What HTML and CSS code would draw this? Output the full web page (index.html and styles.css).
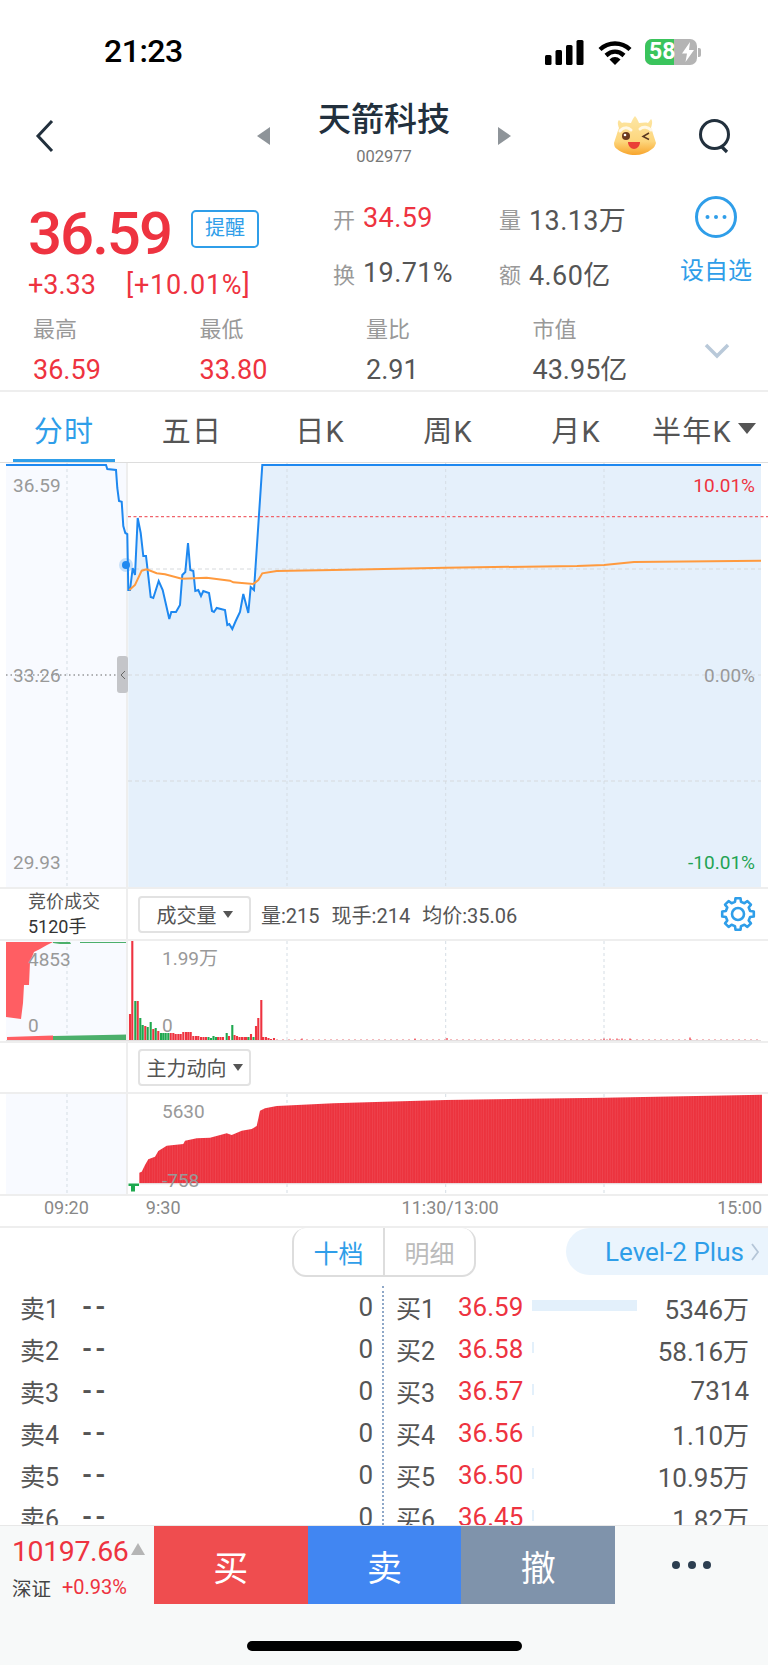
FILE: index.html
```html
<html>
    <head>
        <title>天箭科技</title>
        <meta charset="utf-8">
        <link rel="stylesheet" href="styles.css">
    </head>
    <body>
        <div class="statusbar">
            <span class="clock">21:23</span>
            <svg class="signal" width="40" height="26" viewBox="0 0 40 26">
                <rect x="0" y="15" width="6.5" height="10" rx="1.5"/>
                <rect x="10.5" y="10" width="6.5" height="15" rx="1.5"/>
                <rect x="21" y="5" width="6.5" height="20" rx="1.5"/>
                <rect x="31.5" y="0" width="7" height="25" rx="1.5"/>
            </svg>
            <svg class="wifi" width="34" height="25" viewBox="0 0 34 25">
                <path d="M2 9.5C10.5 1.5 23.5 1.5 32 9.5" fill="none" stroke="#000" stroke-width="4.4"/>
                <path d="M8 15.5C13.5 10.5 20.5 10.5 26 15.5" fill="none" stroke="#000" stroke-width="4.4"/>
                <path d="M11.5 19.5C14.8 16.2 19.2 16.2 22.5 19.5L17 25z"/>
            </svg>
            <div class="battery">
                <div class="battery-level"><span class="battery-num">58</span></div>
                <svg class="bolt" width="14" height="20" viewBox="0 0 14 20"><path d="M9 0L1 11.5h5L4.5 20 13 8H8z"/></svg>
            </div>
            <i class="battery-nub"></i>
        </div>

        <div class="nav">
            <svg class="back" width="20" height="34" viewBox="0 0 20 34"><path d="M17 2L3 17l14 15" fill="none" stroke="#22303d" stroke-width="3"/></svg>
            <i class="arrow arrow-left"></i>
            <div class="title-box">
                <div class="title">天箭科技</div>
                <div class="code">002977</div>
            </div>
            <i class="arrow arrow-right"></i>
            <svg class="mascot" width="44" height="40" viewBox="0 0 44 40">
                <defs>
                    <linearGradient id="mascotFill" x1="0" y1="0" x2="0" y2="1">
                        <stop offset="0" stop-color="#fde7a6"/>
                        <stop offset="0.65" stop-color="#fdd67c"/>
                        <stop offset="1" stop-color="#f8a52c"/>
                    </linearGradient>
                </defs>
                <path d="M22 0C24 2 25 5 26 7 29 7 32 6 35 7L38 3C40 5 39 9 38 12 40 17 41 21 43 27 42 30 41 32 39 33 34 37 28 39 22 39S9 37 4 33C2 32 1 30 1 27 3 21 4 17 6 12 5 9 4 6 6 4L9 7C12 6 15 7 18 7 19 5 20 2 22 0z" fill="url(#mascotFill)"/>
                <path d="M7 15C10 11 15 11 18 14M27 13C30 10 35 11 38 14" fill="none" stroke="#fff8e6" stroke-width="3" stroke-linecap="round"/>
                <circle cx="13" cy="20" r="4" fill="#6b3a1c"/>
                <circle cx="12" cy="19" r="1.3" fill="#fff"/>
                <path d="M36 17l-6 3.500 6 3" fill="none" stroke="#5b3a22" stroke-width="1.5"/>
                <path d="M15 26h12c0 4-3 7-6 7s-6-3-6-7z" fill="#ea3f36"/>
            </svg>
            <svg class="search" width="34" height="36" viewBox="0 0 34 36">
                <circle cx="16.500" cy="16.500" r="14" fill="none" stroke="#22303d" stroke-width="3"/>
                <path d="M23 28l6 6" stroke="#22303d" stroke-width="3.200"/>
            </svg>
        </div>

        <div class="quote">
            <div class="price-col">
                <div class="price-row">
                    <span class="price">36.59</span>
                    <span class="remind">提醒</span>
                </div>
                <div class="delta"><span class="delta-abs">+3.33</span><span class="delta-pct">[+10.01%]</span></div>
            </div>
            <div class="mid-col">
                <div class="kv"><label>开</label><b class="red">34.59</b></div>
                <div class="kv"><label>换</label><b>19.71%</b></div>
            </div>
            <div class="vol-col">
                <div class="kv"><label>量</label><b>13.13万</b></div>
                <div class="kv"><label>额</label><b>4.60亿</b></div>
            </div>
            <div class="action">
                <svg width="44" height="44" viewBox="0 0 44 44">
                    <circle cx="22" cy="22" r="19.500" fill="none" stroke="#2f9ee9" stroke-width="3"/>
                    <circle cx="13.500" cy="22" r="2" fill="#2f9ee9"/>
                    <circle cx="22" cy="22" r="2" fill="#2f9ee9"/>
                    <circle cx="30.500" cy="22" r="2" fill="#2f9ee9"/>
                </svg>
                <span>设自选</span>
            </div>
        </div>

        <div class="stats">
            <div class="stat"><label>最高</label><b class="red">36.59</b></div>
            <div class="stat"><label>最低</label><b class="red">33.80</b></div>
            <div class="stat"><label>量比</label><b>2.91</b></div>
            <div class="stat"><label>市值</label><b>43.95亿</b></div>
            <svg class="more" width="26" height="16" viewBox="0 0 26 16"><path d="M2 2l11 11L24 2" fill="none" stroke="#b9c9d9" stroke-width="3.500"/></svg>
        </div>

        <div class="tabs">
            <div class="tab active">分时</div>
            <div class="tab">五日</div>
            <div class="tab">日K</div>
            <div class="tab">周K</div>
            <div class="tab">月K</div>
            <div class="tab">半年K<i class="caret caret-big"></i></div>
        </div>

        <svg class="chart" width="768" height="424" viewBox="0 463 768 424">
            <rect class="pre-bg" x="6" y="463" width="122" height="424"/>
            <path class="area" d="M128.300 590H130L132.700 568 135 575 137.700 518 140.700 533 143.300 556H146L150.700 597 153.300 598 158.700 581 162.700 590 169.300 619 171.300 612H176L180 605 182.300 575 185.300 572 188 543 190.300 570 193.300 571 195.300 591 198.300 590 201 596 203.300 591 209 593 212 611 214 612 216.700 608 225 610 227.300 625 229.300 624 232.300 629 235.700 621 240 612 243.300 594 248.300 613 250.700 587 254 590 262.300 465H761V887H128.300z"/>
            <path class="grid-v" d="M67 463V887M287 463V887M445.700 463V887M604 463V887"/>
            <path class="grid-h" d="M128 569H761M128 675H761M128 781H761"/>
            <path class="limit" d="M128 516.700H768"/>
            <path class="split" d="M127 463V887"/>
            <path class="pre-close" d="M6 675H118"/>
            <circle class="dot-halo" cx="126" cy="565" r="7"/>
            <circle class="dot" cx="126" cy="565" r="4"/>
            <polyline class="line-price" points="6,465 106,465 107.300,469 116,470 117.300,488 119,501 121.700,501.700 123.300,526 125.300,533 127.300,534 128.300,590 130,590 132.700,568 135,575 137.700,518 140.700,533 143.300,556 146,556 150.700,597 153.300,598 158.700,581 162.700,590 169.300,619 171.300,612 176,612 180,605 182.300,575 185.300,572 188,543 190.300,570 193.300,571 195.300,591 198.300,590 201,596 203.300,591 209,593 212,611 214,612 216.700,608 225,610 227.300,625 229.300,624 232.300,629 235.700,621 240,612 243.300,594 248.300,613 250.700,587 254,590 262.300,465 761,465"/>
            <polyline class="line-avg" points="129.300,590 135,585 141.700,570.700 146.700,569.300 156.700,573.300 165,574.300 181.700,578.700 206.700,577.700 230,580.700 233.300,582.300 253.300,584 258.300,580 262.300,573.300 276.700,571 333,570 384,569 445.700,567.700 577,566 604,565 634,562 761,560.700"/>
            <rect class="handle" x="117" y="656" width="11" height="37" rx="3"/>
            <path class="handle-mark" d="M125 671l-4 4 4 4"/>
            <text class="axis" x="13" y="492">36.59</text>
            <text class="axis" x="13" y="682">33.26</text>
            <text class="axis" x="13" y="869">29.93</text>
            <text class="axis axis-up" x="755" y="492">10.01%</text>
            <text class="axis axis-right" x="755" y="682">0.00%</text>
            <text class="axis axis-down" x="755" y="869">-10.01%</text>
        </svg>

        <div class="toolbar">
            <div class="auction">
                <span class="auction-name">竞价成交</span>
                <span class="auction-val">5120手</span>
            </div>
            <div class="picker">成交量<i class="caret"></i></div>
            <div class="readout"><span>量:215</span><span>现手:214</span><span>均价:35.06</span></div>
            <svg class="gear" width="36" height="36" viewBox="-18 -18 36 36">
                <polygon points="12.13,-3.02 15.8,-2.5 15.8,2.5 12.13,3.02 10.71,6.44 12.94,9.4 9.4,12.94 6.44,10.71 3.02,12.13 2.5,15.8 -2.5,15.8 -3.02,12.13 -6.44,10.71 -9.4,12.94 -12.94,9.4 -10.71,6.44 -12.13,3.02 -15.8,2.5 -15.8,-2.5 -12.13,-3.02 -10.71,-6.44 -12.94,-9.4 -9.4,-12.94 -6.44,-10.71 -3.02,-12.13 -2.5,-15.8 2.5,-15.8 3.02,-12.13 6.44,-10.71 9.4,-12.94 12.94,-9.4 10.71,-6.44"/>
                <circle cx="0" cy="0" r="6"/>
            </svg>
        </div>

        <svg class="chart" width="768" height="100" viewBox="0 941 768 100">
            <rect class="pre-bg" x="6" y="941" width="122" height="100"/>
            <path class="grid-v" d="M67 941V1040M287 941V1040M445.700 941V1040M604 941V1040"/>
            <path class="auction-up" d="M6 942H53L47 945 40 949 34 952 30 962 29 985H24L23 1003 21 1019 6 1017zM7 1037L53 1035.500V1040H7z"/>
            <path class="auction-down" d="M53 942H70L71 944 60 944 53 943zM80 942H128V943H80zM53 1036L128 1034.500V1040H53z"/>
            <path class="split" d="M127 941V1041"/>
            <path class="base" d="M6 1040.500H761"/>
            <path class="vol-up" d="M130 1040V1014M132.300 1040V941M137.700 1040V1001M145.300 1040V1026M153.300 1040V1029M158.300 1040V1031M170.700 1040V1033M173.300 1040V1033M175.700 1040V1034M178.300 1040V1034M180.700 1040V1034M183.300 1040V1032M186 1040V1032M188.300 1040V1032M190.700 1040V1032M193.300 1040V1036M196 1040V1036M198.300 1040V1036M201 1040V1037M203.500 1040V1037M206 1040V1037M218 1040V1037M220.500 1040V1037M223 1040V1037M229 1040V1036M234.500 1040V1035M237 1040V1036M239.500 1040V1037M242 1040V1037M244.500 1040V1037M246.500 1040V1037M251 1040V1034M256 1040V1026M258.300 1040V1018M261.300 1040V1000M263.300 1040V1037M266 1040V1037M268.500 1040V1038M271 1040V1039M274 1040V1038"/>
            <path class="vol-down" d="M135.300 1040V1001M140.300 1040V1018M142.700 1040V1025M147.700 1040V1027M150.700 1040V1022M155.700 1040V1028M161 1040V1033M163.300 1040V1033M165.700 1040V1033M168.300 1040V1033M208.500 1040V1037M211 1040V1038M213.500 1040V1036M216 1040V1037M226.700 1040V1033M232.300 1040V1025M248.500 1040V1037M253.500 1040V1037"/>
            <path class="vol-dust" d="M276 1039.500H761"/>
            <path class="vol-tick" d="M302 1040V1038.500M415 1040V1038.500M447 1040V1038M690 1040V1037.500M604 1040V1038.500M610 1040V1038.500M617 1040V1038.500M622 1040V1038.500M630 1040V1038.500"/>
            <text class="axis" x="28" y="966">4853</text>
            <text class="axis" x="28" y="1032">0</text>
            <text class="axis" x="162" y="965">1.99万</text>
            <text class="axis" x="162" y="1032">0</text>
        </svg>

        <div class="toolbar toolbar-flow">
            <div class="auction"></div>
            <div class="picker">主力动向<i class="caret"></i></div>
        </div>

        <svg class="chart" width="768" height="100" viewBox="0 1094 768 100">
            <defs>
                <pattern id="barStripe" width="2.530" height="10" patternUnits="userSpaceOnUse">
                    <rect class="stripe-fill" width="2.530" height="10"/>
                    <rect class="stripe-gap" width="0.500" height="10"/>
                </pattern>
            </defs>
            <rect class="pre-bg" x="6" y="1094" width="122" height="100"/>
            <path class="grid-v" d="M67 1094V1194M287 1094V1106M445.700 1094V1100M604 1094V1098M287 1184V1194M445.700 1184V1194M604 1184V1194"/>
            <path class="split" d="M127 1094V1194"/>
            <path class="flow-up" d="M139.300 1183.300V1172.700L141.700 1171.700 145 1165 148.300 1159.300 155 1156.700 158.300 1151 166.700 1145.700 183.300 1144 185 1140.700 196.700 1138.300 210 1137.700 226.700 1133.300 231.700 1135 241.700 1130.700 251.700 1129 256.700 1126 260 1110.700 265 1108.300 276.700 1106 333.300 1103.300 384 1101.700 445.700 1100 604 1097.700 762 1094.700V1183.300z"/>
            <path class="flow-down" d="M128.500 1183.500H139V1186H135V1191.500H131V1186H128.500z"/>
            <path class="base" d="M139 1183.800H762"/>
            <text class="axis" x="162" y="1118">5630</text>
            <text class="axis" x="162" y="1187">-758</text>
        </svg>

        <div class="timeline">
            <span class="t1">09:20</span>
            <span class="t2">9:30</span>
            <span class="t3">11:30/13:00</span>
            <span class="t4">15:00</span>
        </div>

        <div class="book-head">
            <div class="segment">
                <span class="seg seg-on">十档</span>
                <span class="seg">明细</span>
            </div>
            <div class="level2">Level-2 Plus
                <svg width="9" height="18" viewBox="0 0 9 18"><path d="M1 1l6 8-6 8" fill="none" stroke="#b5c6d8" stroke-width="1.800"/></svg>
            </div>
        </div>

        <div class="book">
            <div class="side side-sell">
                <div class="level"><span class="lv">卖1</span><span class="px">--</span><span class="amt">0</span></div>
                <div class="level"><span class="lv">卖2</span><span class="px">--</span><span class="amt">0</span></div>
                <div class="level"><span class="lv">卖3</span><span class="px">--</span><span class="amt">0</span></div>
                <div class="level"><span class="lv">卖4</span><span class="px">--</span><span class="amt">0</span></div>
                <div class="level"><span class="lv">卖5</span><span class="px">--</span><span class="amt">0</span></div>
                <div class="level"><span class="lv">卖6</span><span class="px">--</span><span class="amt">0</span></div>
            </div>
            <div class="side side-buy">
                <div class="level"><span class="lv">买1</span><span class="px red">36.59</span><i class="depth" style="width:105px"></i><span class="amt">5346万</span></div>
                <div class="level"><span class="lv">买2</span><span class="px red">36.58</span><i class="depth" style="width:2px"></i><span class="amt">58.16万</span></div>
                <div class="level"><span class="lv">买3</span><span class="px red">36.57</span><i class="depth" style="width:2px"></i><span class="amt">7314</span></div>
                <div class="level"><span class="lv">买4</span><span class="px red">36.56</span><i class="depth" style="width:2px"></i><span class="amt">1.10万</span></div>
                <div class="level"><span class="lv">买5</span><span class="px red">36.50</span><i class="depth" style="width:2px"></i><span class="amt">10.95万</span></div>
                <div class="level"><span class="lv">买6</span><span class="px red">36.45</span><i class="depth" style="width:2px"></i><span class="amt">1.82万</span></div>
            </div>
        </div>

        <div class="footer">
            <div class="footer-row">
                <div class="index">
                    <div class="index-top"><span class="index-val">10197.66</span><i class="index-up"></i></div>
                    <div class="index-bottom"><span class="index-name">深证</span><span class="index-pct">+0.93%</span></div>
                </div>
                <div class="trade trade-buy">买</div>
                <div class="trade trade-sell">卖</div>
                <div class="trade trade-cancel">撤</div>
                <div class="dots"><i></i><i></i><i></i></div>
            </div>
            <div class="home-bar"></div>
        </div>
    </body>
</html>
```

FILE: styles.css
```css
* {
box-sizing: border-box;
}
html, body {
margin: 0;
padding: 0;
}
body {
width: 768px;
height: 1665px;
overflow: hidden;
background-color: #FFF;
color: #555;
font-family: Roboto, "Noto Sans CJK SC", sans-serif;
}
i {
display: block;
}
.red {
color: #ee3340;
}

/* status bar */
.statusbar {
height: 104px;
display: flex;
align-items: center;
padding-left: 104px;
}
.clock {
font-size: 32px;
font-weight: 500;
color: #000;
width: 441px;
letter-spacing: -0.5px;
margin-top: -2px;
}
.signal {
margin-top: 1px;
}
.wifi {
margin-left: 13px;
}
.battery {
margin-left: 13px;
width: 52px;
height: 26px;
border-radius: 7px;
overflow: hidden;
background-color: #b4b4b4;
display: flex;
}
.battery-level {
width: 29px;
background-color: #3ac45c;
color: #FFF;
font-size: 23px;
font-weight: 700;
line-height: 26px;
padding-left: 4px;
}
.battery-num {
white-space: nowrap;
}
.bolt {
fill: #FFF;
margin: 3px 0 0 7px;
}
.battery-nub {
width: 3px;
height: 9px;
margin-left: 1px;
border-radius: 0 2px 2px 0;
background-color: #b4b4b4;
}

/* nav */
.nav {
height: 64px;
display: flex;
align-items: center;
padding-left: 35px;
}
.arrow {
width: 0;
height: 0;
border-top: 9px solid transparent;
border-bottom: 9px solid transparent;
}
.arrow-left {
margin-left: 202px;
border-right: 13px solid #8e9499;
}
.arrow-right {
border-left: 13px solid #8e9499;
}
.title-box {
width: 228px;
text-align: center;
margin-top: -3px;
}
.title {
font-size: 33px;
line-height: 38px;
font-weight: 500;
color: #22303d;
}
.code {
font-size: 16.500px;
line-height: 22px;
margin-top: 7px;
color: #777;
}
.mascot {
margin-left: 102px;
}
.search {
margin-left: 41px;
}

/* quote */
.quote {
height: 144px;
display: flex;
padding-left: 28px;
}
.price-col {
width: 305px;
padding-top: 36px;
}
.price-row {
display: flex;
align-items: flex-start;
}
.price {
font-size: 60px;
line-height: 60px;
font-weight: 500;
color: #ee3340;
letter-spacing: -2px;
width: 163px;
}
.remind {
width: 68px;
height: 38px;
margin-top: 6px;
border: 2px solid #2f9ee9;
border-radius: 5px;
color: #2f9ee9;
font-size: 20px;
line-height: 33px;
text-align: center;
}
.delta {
margin-top: 6px;
display: flex;
gap: 30px;
font-size: 27px;
line-height: 30px;
color: #ee3340;
white-space: nowrap;
}
.delta-pct {
letter-spacing: 0.8px;
}
.mid-col {
width: 166px;
padding-top: 34px;
}
.vol-col {
width: 181px;
padding-top: 34px;
}
.kv {
height: 32px;
margin-bottom: 23px;
display: flex;
align-items: center;
font-size: 27px;
white-space: nowrap;
letter-spacing: 0.4px;
}
.kv label {
font-size: 22px;
color: #999;
width: 30px;
letter-spacing: 0;
}
.kv b {
font-weight: 400;
}
.action {
width: 72px;
padding-top: 27px;
display: flex;
flex-direction: column;
align-items: center;
color: #2f9ee9;
font-size: 24px;
line-height: 30px;
}
.action svg {
margin-bottom: 17px;
}

/* stats */
.stats {
height: 80px;
padding: 3px 0 0 33px;
display: flex;
border-bottom: 2px solid #eee;
}
.stat {
width: 166.500px;
display: flex;
flex-direction: column;
}
.stat label {
font-size: 22px;
line-height: 30px;
color: #999;
}
.stat b {
font-weight: 400;
font-size: 27px;
line-height: 32px;
margin-top: 9px;
white-space: nowrap;
}
.more {
margin: 28px 0 0 5px;
}

/* tabs */
.tabs {
height: 71px;
display: grid;
grid-template-columns: repeat(6, 128px);
border-bottom: 1px solid #ddd;
}
.tab {
margin: 0 13px;
padding-top: 6px;
display: flex;
align-items: center;
justify-content: center;
font-size: 29px;
letter-spacing: 1.200px;
white-space: nowrap;
border-bottom: 3px solid transparent;
}
.tab.active {
color: #2f9ee9;
border-bottom-color: #2f9ee9;
}
.caret {
width: 0;
height: 0;
margin-left: 6px;
border-left: 5.500px solid transparent;
border-right: 5.500px solid transparent;
border-top: 7px solid #555;
}
.caret-big {
border-left-width: 9px;
border-right-width: 9px;
border-top-width: 11px;
}

/* charts */
.chart {
display: block;
}
.pre-bg {
fill: #f8faff;
}
.area {
fill: #e5f0fb;
}
.grid-v {
fill: none;
stroke: #d5dde4;
stroke-width: 1;
stroke-dasharray: 3 3;
}
.grid-h {
fill: none;
stroke: #d6d9dc;
stroke-width: 1;
stroke-dasharray: 4 3;
}
.limit {
fill: none;
stroke: #f0646c;
stroke-width: 1.200;
stroke-dasharray: 3 2.500;
}
.split {
fill: none;
stroke: #eee;
stroke-width: 2;
}
.pre-close {
fill: none;
stroke: #666;
stroke-width: 1;
stroke-dasharray: 1.500 3;
}
.dot-halo {
fill: #c6e0fa;
}
.dot {
fill: #1e88f0;
}
.line-price {
fill: none;
stroke: #1e88f0;
stroke-width: 2;
}
.line-avg {
fill: none;
stroke: #ff9a3e;
stroke-width: 2;
}
.handle {
fill: #c4c5c9;
}
.handle-mark {
fill: none;
stroke: #666;
stroke-width: 1;
}
.axis {
font-size: 19px;
fill: #999;
}
.axis-right, .axis-up, .axis-down {
text-anchor: end;
}
.axis-up {
fill: #ee3340;
}
.axis-down {
fill: #1fa353;
}
.auction-up {
fill: #ff5e63;
}
.auction-down {
fill: #4caf6b;
}
.base {
fill: none;
stroke: #e3dfe0;
stroke-width: 1;
}
.vol-up, .vol-down {
fill: none;
stroke-width: 2.100;
}
.vol-up {
stroke: #ee3340;
}
.vol-down {
stroke: #1fa84f;
}
.vol-dust {
fill: none;
stroke: #f4b9bc;
stroke-width: 1;
stroke-dasharray: 2 4;
}
.vol-tick {
fill: none;
stroke: #ee3340;
stroke-width: 1.200;
}
.flow-up {
fill: url(#barStripe);
}
.stripe-fill {
fill: #ec333e;
}
.stripe-gap {
fill: #f0505a;
}
.flow-down {
fill: #1fa84f;
}

/* toolbar between charts */
.toolbar {
height: 54px;
display: flex;
align-items: center;
border-top: 2px solid #eee;
border-bottom: 2px solid #eee;
}
.toolbar-flow {
height: 53px;
}
.auction {
width: 128px;
height: 100%;
margin-right: 10px;
padding-left: 28px;
border-right: 2px solid #eee;
display: flex;
flex-direction: column;
justify-content: center;
}
.auction-name {
font-size: 18px;
line-height: 25px;
color: #555;
}
.auction-val {
font-size: 18px;
line-height: 25px;
color: #333;
}
.picker {
width: 113px;
height: 37px;
border: 2px solid #e2e2e2;
border-radius: 4px;
display: flex;
align-items: center;
justify-content: center;
font-size: 20px;
color: #555;
white-space: nowrap;
}
.readout {
margin-left: 10px;
display: flex;
gap: 12px;
font-size: 20px;
white-space: nowrap;
}
.gear {
margin-left: auto;
margin-right: 12px;
fill: none;
stroke: #2f9ee9;
stroke-width: 2.600;
stroke-linejoin: round;
}

/* time axis */
.timeline {
height: 32px;
display: flex;
align-items: center;
padding: 0 6px 8px 44px;
font-size: 18px;
color: #888;
white-space: nowrap;
border-top: 2px solid #eee;
}
.t2 {
margin-left: 57px;
}
.t3 {
margin-left: 221px;
}
.t4 {
margin-left: auto;
}

/* order book */
.book-head {
height: 60px;
display: flex;
align-items: flex-start;
padding-left: 292px;
border-top: 2px solid #eee;
}
.segment {
width: 184px;
height: 49px;
display: flex;
border: 2px solid #ddd;
border-top: none;
border-radius: 14px;
overflow: hidden;
}
.seg {
flex: 1;
display: flex;
align-items: center;
justify-content: center;
font-size: 25px;
color: #bbb;
}
.seg-on {
color: #2f9ee9;
border-right: 2px solid #ddd;
}
.level2 {
margin-left: auto;
width: 202px;
height: 47px;
padding-left: 39px;
display: flex;
align-items: center;
gap: 7px;
font-size: 26px;
color: #2f9ee9;
background-color: #eaf4fd;
border-radius: 24px 0 0 24px;
white-space: nowrap;
}
.book {
height: 239px;
display: flex;
overflow: hidden;
}
.side {
width: 384px;
}
.side-sell {
padding: 0 9px 0 20px;
border-right: 2px dotted #8fa8c8;
}
.side-buy {
padding: 0 19px 0 12px;
}
.level {
height: 42px;
display: flex;
align-items: center;
font-size: 26px;
white-space: nowrap;
}
.lv {
font-size: 25px;
width: 62px;
}
.px {
width: 74px;
}
.side-sell .px {
width: auto;
font-weight: 700;
letter-spacing: 3px;
}
.depth {
height: 11px;
margin-top: -4px;
background-color: #e3f0fb;
}
.amt {
margin-left: auto;
}

/* bottom bar */
.footer {
height: 140px;
background-color: #f7f9f9;
border-top: 1px solid #e8e8e8;
}
.footer-row {
height: 78px;
display: flex;
}
.index {
width: 154px;
padding-left: 12px;
}
.index-top {
display: flex;
align-items: center;
height: 46px;
padding-top: 5px;
}
.index-val {
font-size: 28.500px;
color: #ee3340;
width: 119px;
letter-spacing: -0.4px;
}
.index-up {
width: 0;
height: 0;
margin-top: -6px;
border-left: 7.500px solid transparent;
border-right: 7.500px solid transparent;
border-bottom: 12px solid #b5b5b5;
}
.index-bottom {
display: flex;
align-items: center;
height: 30px;
}
.index-name {
font-size: 19.500px;
color: #444;
width: 50px;
}
.index-pct {
font-size: 20px;
color: #ee3340;
}
.trade {
width: 153.700px;
display: flex;
align-items: center;
justify-content: center;
font-size: 35px;
color: #FFF;
}
.trade-buy {
background-color: #ef4d4f;
}
.trade-sell {
background-color: #4186f2;
}
.trade-cancel {
background-color: #7f93ab;
}
.dots {
flex: 1;
display: flex;
align-items: center;
justify-content: center;
gap: 7.500px;
}
.dots i {
width: 8px;
height: 8px;
border-radius: 50%;
background-color: #2c3e50;
}
.home-bar {
width: 275px;
height: 10px;
margin: 37px auto 0;
border-radius: 5px;
background-color: #000;
}
```
